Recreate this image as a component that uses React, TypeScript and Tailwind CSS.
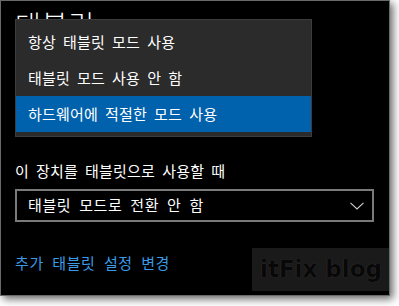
const menuItems = [
  "항상 태블릿 모드 사용",
  "태블릿 모드 사용 안 함",
  "하드웨어에 적절한 모드 사용",
];

export default function App() {
  return (
    <div
      className="w-[399px] h-[306px] bg-white overflow-hidden"
      style={{ fontFamily: '"Noto Sans CJK KR", "Noto Sans", sans-serif' }}
    >
      <div className="relative w-[390px] h-[296px] bg-black border border-[#6a6a6a] shadow-[3px_3px_8px_rgba(0,0,0,0.6)] overflow-hidden">
        {/* page content */}
        <div className="flex flex-col pl-[14px] pr-[15px]">
          <h1 className="mt-[3px] text-[28px] leading-[40px] font-light text-white tracking-[1px]">태블릿</h1>
          <p className="mt-[116px] text-[15px] leading-[22px] text-white tracking-[0.2px] [word-spacing:3.5px]">
            이 장치를 태블릿으로 사용할 때
          </p>
          <div className="mt-[7px] h-[33px] border-2 border-[#7a7a7a] flex items-center justify-between pl-[11px] pr-[8px]">
            <span className="text-[15px] text-white tracking-[0.6px] [word-spacing:4px]">
              태블릿 모드로 전환 안 함
            </span>
            <svg width="14" height="8" viewBox="0 0 14 8" fill="none" className="mt-[1px]">
              <polyline points="0.5,0.8 7,7 13.5,0.8" stroke="#d0d0d0" strokeWidth="1.1" />
            </svg>
          </div>
          <a className="mt-[30px] text-[15px] leading-[22px] text-[#3a9be6] tracking-[0.6px] [word-spacing:4.5px]">
            추가 태블릿 설정 변경
          </a>
        </div>

        {/* dropdown popup */}
        <div className="absolute left-[14px] top-[18px] w-[297px] bg-[#2b2b2b] border border-[#3c3c3c] py-[4px]">
          {menuItems.map((item, i) => (
            <div
              key={item}
              className={`h-[36px] flex items-center pl-[12px] text-[15px] text-white tracking-[0.2px] [word-spacing:3.5px] ${
                i === 2 ? "bg-[#0061ac]" : ""
              }`}
            >
              {item}
            </div>
          ))}
        </div>

        {/* watermark */}
        <div className="absolute left-[251px] top-[247px] w-[138px] h-[43px] bg-[#1a1a1a] flex items-center justify-center">
          <span
            className="text-[23px] font-bold text-[#080808] [text-shadow:0_0_1px_#444]"
            style={{ fontFamily: '"DejaVu Sans", sans-serif' }}
          >
            itFix blog
          </span>
        </div>
      </div>
    </div>
  );
}
